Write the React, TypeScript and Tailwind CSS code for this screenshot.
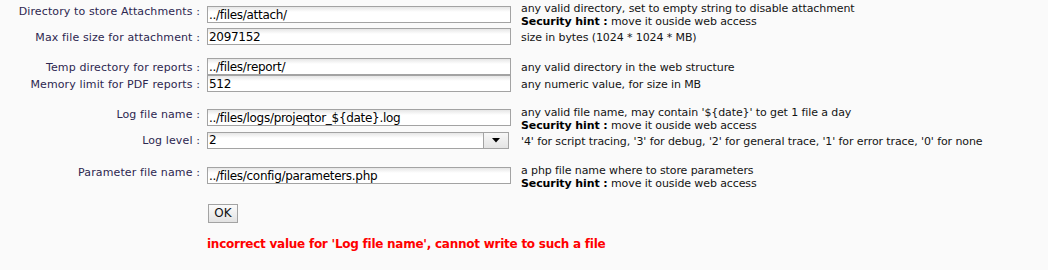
import React from "react";

function TextBox({ value }: { value: string }) {
  return (
    <input
      readOnly
      value={value}
      className="block h-[17px] w-[304px] border border-[#a3a3a3] bg-[linear-gradient(to_bottom,#e6e6e6,#ffffff_5px)] p-0 pl-[1px] text-[12px] leading-[15px] tracking-[-0.3px] text-black outline-none"
    />
  );
}

function SelectBox({ value }: { value: string }) {
  return (
    <div className="flex h-[17px] w-[302px] border border-[#a3a3a3] bg-white">
      <div className="flex-1 bg-[linear-gradient(to_bottom,#e6e6e6,#ffffff_5px)] pl-[1px] text-[12px] leading-[15px] tracking-[-0.3px] text-black">
        {value}
      </div>
      <div className="flex w-[25px] items-center justify-center border-l border-[#a3a3a3] bg-[linear-gradient(to_bottom,#f7f7f7,#e4e4e4)]">
        <svg width="8" height="5" viewBox="0 0 8 5">
          <polygon points="0,0 8,0 4,4.5" fill="#000" />
        </svg>
      </div>
    </div>
  );
}

function SecurityHint() {
  return (
    <div>
      <span className="font-bold text-black">Security hint :</span> move it ouside web access
    </div>
  );
}

const labelCls =
  "w-[207px] shrink-0 pr-[7px] text-right text-[11px] leading-[13px] tracking-[0.12px] text-[#2d2750] whitespace-nowrap";
const hintCls = "pl-[10px] text-[11px] leading-[13px] tracking-[-0.1px] text-[#141414] whitespace-nowrap";

export default function App() {
  return (
    <div className="min-h-screen w-full bg-[#fafafa] font-['DejaVu_Sans',sans-serif]">
      {/* Row 1 */}
      <div className="flex h-[28px] items-start">
        <div className={labelCls + " mt-[5px]"}>Directory to store Attachments :</div>
        <div className="mt-[6px]">
          <TextBox value="../files/attach/" />
        </div>
        <div className={hintCls + " mt-[2px]"}>
          <div>any valid directory, set to empty string to disable attachment</div>
          <SecurityHint />
        </div>
      </div>
      {/* Row 2 */}
      <div className="flex h-[30px] items-start">
        <div className={labelCls + " mt-[3px]"}>Max file size for attachment :</div>
        <div>
          <TextBox value="2097152" />
        </div>
        <div className={hintCls + " mt-[3px]"}>size in bytes (1024 * 1024 * MB)</div>
      </div>
      {/* Row 3 */}
      <div className="flex h-[17px] items-start">
        <div className={labelCls + " mt-[3px]"}>Temp directory for reports :</div>
        <div>
          <TextBox value="../files/report/" />
        </div>
        <div className={hintCls + " mt-[3px]"}>any valid directory in the web structure</div>
      </div>
      {/* Row 4 */}
      <div className="flex h-[31px] items-start">
        <div className={labelCls + " mt-[3px]"}>Memory limit for PDF reports :</div>
        <div>
          <TextBox value="512" />
        </div>
        <div className={hintCls + " mt-[3px]"}>any numeric value, for size in MB</div>
      </div>
      {/* Row 5 */}
      <div className="flex h-[26px] items-start">
        <div className={labelCls + " mt-[2px]"}>Log file name :</div>
        <div className="mt-[3px]">
          <TextBox value={"../files/logs/projeqtor_${date}.log"} />
        </div>
        <div className={hintCls}>
          <div>{"any valid file name, may contain '${date}' to get 1 file a day"}</div>
          <SecurityHint />
        </div>
      </div>
      {/* Row 6 */}
      <div className="flex h-[32px] items-start">
        <div className={labelCls + " mt-[2px]"}>Log level :</div>
        <div>
          <SelectBox value="2" />
        </div>
        <div className={hintCls + " mt-[3px] ml-[2px]"}>
          '4' for script tracing, '3' for debug, '2' for general trace, '1' for error trace, '0' for none
        </div>
      </div>
      {/* Row 7 */}
      <div className="flex h-[26px] items-start">
        <div className={labelCls + " mt-[2px]"}>Parameter file name :</div>
        <div className="mt-[3px]">
          <TextBox value="../files/config/parameters.php" />
        </div>
        <div className={hintCls}>
          <div>a php file name where to store parameters</div>
          <SecurityHint />
        </div>
      </div>
      {/* OK button */}
      <div className="mt-[14px] pl-[208px]">
        <button className="block h-[19px] w-[30px] border border-[#a3a3a3] bg-[linear-gradient(to_bottom,#fbfbfb,#e2e2e2)] p-0 text-[12px] leading-[17px] text-[#111]">
          OK
        </button>
      </div>
      {/* Error */}
      <div className="mt-[14px] pl-[207px] text-[12px] font-bold leading-[14px] tracking-[-0.25px] text-[#ff0000] whitespace-nowrap">
        incorrect value for 'Log file name', cannot write to such a file
      </div>
    </div>
  );
}
